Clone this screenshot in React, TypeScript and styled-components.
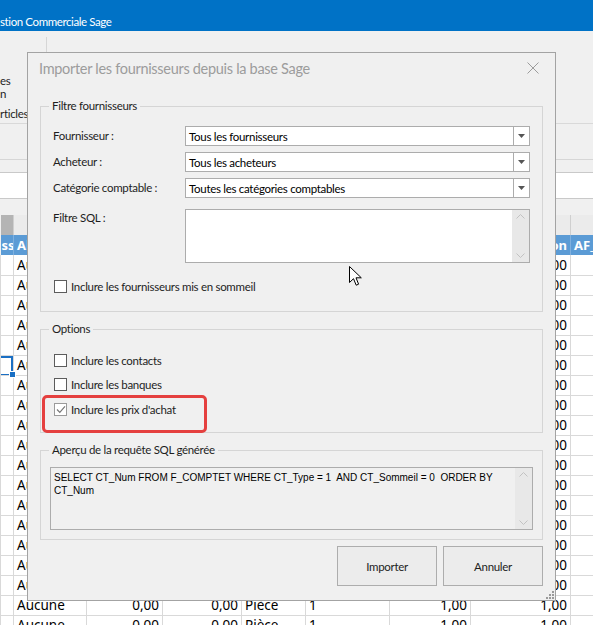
import React from "react";
import styled, { createGlobalStyle } from "styled-components";

const UI = `Lato, "Noto Sans", "Liberation Sans", sans-serif`;
const GRID = `"Noto Sans", "Liberation Sans", sans-serif`;

const GlobalStyle = createGlobalStyle`
  html, body { margin: 0; padding: 0; }
  body { font-family: ${UI}; background: #f0f0f0; }
  * { box-sizing: border-box; }
`;

const S = {
  Screen: styled.div`
    position: relative;
    width: 593px;
    height: 625px;
    overflow: hidden;
    background: #f0f0f0;
    color: #1e1e1e;
  `,
  AppTitle: styled.div`
    height: 31px;
    background: #0072c6;
    color: #fff;
    font-size: 11.5px;
    letter-spacing: -0.4px;
    line-height: 19px;
    padding-top: 12px;
    white-space: nowrap;
  `,
  Ribbon: styled.div`
    height: 93px;
    border-bottom: 1px solid #d9d9d9;
    display: flex;
  `,
  RibbonGroup: styled.div`
    width: 47px;
    margin-top: 6px;
    border-right: 1px solid #d6d6d6;
    display: flex;
    flex-direction: column;
    font-size: 11.5px;
    letter-spacing: -0.3px;
    line-height: 13px;
    padding-top: 37px;
  `,
  RibbonLast: styled.span`
    margin-top: 7px;
  `,
  Toolbar: styled.div`
    height: 36px;
    border-bottom: 1px solid #d6d6d6;
  `,
  SearchBox: styled.div`
    margin-top: 12px;
    height: 27px;
    background: #fff;
    border-top: 1px solid #c9c9c9;
    border-bottom: 1px solid #c9c9c9;
  `,
  Grid: styled.table`
    margin-top: 16px;
    border-collapse: collapse;
    table-layout: fixed;
    width: 640px;
    font-family: ${GRID};
    font-size: 13.5px;
  `,
  FilterCell: styled.td<{ $dark?: boolean }>`
    height: 20px;
    padding: 0;
    background: ${(p) => (p.$dark ? "#b4b4b4" : "#ebebeb")};
    border-right: 1px solid #cfcfcf;
  `,
  HeadCell: styled.th<{ $right?: boolean; $tight?: boolean }>`
    height: 20px;
    padding: ${(p) => (p.$tight ? "0 0 0 1px" : "0 3px")};
    background: #5b9bd5;
    color: #fff;
    font-size: 13px;
    font-weight: 700;
    text-align: ${(p) => (p.$right ? "right" : "left")};
    white-space: nowrap;
    overflow: hidden;
    text-overflow: clip;
    border-right: 1px solid #7fb0df;
  `,
  Cell: styled.td<{ $right?: boolean; $focus?: boolean }>`
    position: relative;
    height: 20px;
    padding: 0 3px;
    line-height: 18px;
    background: #fff;
    color: #000;
    text-align: ${(p) => (p.$right ? "right" : "left")};
    white-space: nowrap;
    overflow: ${(p) => (p.$focus ? "visible" : "hidden")};
    border: 1px solid #d9d9d9;
    border-top: none;
    ${(p) =>
      p.$focus &&
      `
      box-shadow: inset 0 2px 0 #1a6fc4, inset -2px 0 0 #1a6fc4, inset 0 -1px 0 #1a6fc4;
      &::after {
        content: "";
        position: absolute;
        right: -3px;
        bottom: -3px;
        width: 5px;
        height: 5px;
        background: #1a6fc4;
        border: 1px solid #fff;
        z-index: 2;
      }
    `}
  `,
  Dialog: styled.div`
    position: absolute;
    left: 27px;
    top: 52px;
    width: 529px;
    height: 549px;
    border: 1px solid #a3a3a3;
    background: #f0f0f0;
    display: flex;
    flex-direction: column;
    font-size: 11.5px;
    letter-spacing: -0.3px;
    z-index: 5;
  `,
  DialogTitle: styled.div`
    height: 30px;
    padding: 0 16px 0 11px;
    display: flex;
    align-items: center;
    justify-content: space-between;
    font-size: 14.5px;
    letter-spacing: -0.3px;
    color: #9c9c9c;
  `,
  DialogBody: styled.div`
    padding: 0 12px;
    display: flex;
    flex-direction: column;
  `,
  Group: styled.fieldset<{ $top: number }>`
    margin: ${(p) => p.$top}px 0 0 0;
    padding: 0;
    border: 1px solid #d5d5d5;
    min-width: 0;
  `,
  Legend: styled.legend`
    margin-left: 8px;
    padding: 0 3px;
    font-size: 11.5px;
    line-height: 16px;
    color: #1e1e1e;
  `,
  GroupInner: styled.div<{ $pad: string }>`
    padding: ${(p) => p.$pad};
    display: flex;
    flex-direction: column;
  `,
  FieldRow: styled.div<{ $gap: number; $top?: boolean }>`
    display: grid;
    grid-template-columns: 132px 1fr;
    align-items: ${(p) => (p.$top ? "start" : "center")};
    margin-top: ${(p) => p.$gap}px;
  `,
  Label: styled.span<{ $pt?: number }>`
    padding-top: ${(p) => p.$pt ?? 0}px;
    line-height: 16px;
    white-space: nowrap;
  `,
  Combo: styled.div`
    height: 20px;
    border: 1px solid #acacac;
    background: #fff;
    display: flex;
    align-items: center;
  `,
  ComboText: styled.span`
    flex: 1;
    padding-left: 3px;
    color: #000;
    white-space: nowrap;
  `,
  ComboButton: styled.span`
    width: 16px;
    height: 100%;
    border-left: 1px solid #acacac;
    display: flex;
    align-items: center;
    justify-content: center;
  `,
  Memo: styled.div<{ $h: number; $bg: string }>`
    height: ${(p) => p.$h}px;
    border: 1px solid #acacac;
    background: ${(p) => p.$bg};
    display: flex;
  `,
  MemoText: styled.div`
    flex: 1;
    min-width: 0;
    overflow: hidden;
    padding: 3px 3px;
    font-family: "Liberation Sans", sans-serif;
    font-size: 10px;
    letter-spacing: 0;
    line-height: 13px;
    color: #000;
    white-space: pre;
  `,
  ScrollBar: styled.div`
    flex: 0 0 17px;
    background: #e8e8e8;
    display: flex;
    flex-direction: column;
    justify-content: space-between;
    align-items: center;
    padding: 4px 0;
  `,
  CheckRow: styled.label<{ $gap: number }>`
    position: relative;
    display: flex;
    align-items: center;
    gap: 4px;
    height: 16px;
    margin-top: ${(p) => p.$gap}px;
    margin-left: 1px;
    white-space: nowrap;
  `,
  Box: styled.span<{ $checked?: boolean }>`
    width: 13px;
    height: 13px;
    border: 1px solid ${(p) => (p.$checked ? "#9a9a9a" : "#5c5c5c")};
    background: #fff;
    display: flex;
    align-items: center;
    justify-content: center;
  `,
  Highlight: styled.span`
    position: absolute;
    left: -12px;
    top: -6px;
    width: 165px;
    height: 38px;
    border: 3px solid #e5403f;
    border-radius: 5px;
    pointer-events: none;
  `,
  Buttons: styled.div`
    display: flex;
    justify-content: flex-end;
    gap: 6px;
    margin-top: 6px;
  `,
  Button: styled.button`
    width: 100px;
    height: 40px;
    border: 1px solid #adadad;
    background: #ececec;
    font-family: ${UI};
    font-size: 11.5px;
    letter-spacing: -0.3px;
    color: #1e1e1e;
  `,
  Grip: styled.svg`
    position: absolute;
    right: 1px;
    bottom: 1px;
  `,
  Cursor: styled.svg`
    position: absolute;
    left: 349px;
    top: 266px;
    z-index: 10;
  `,
};

const cols = [13, 73, 76, 79, 64, 84, 81, 100, 70];
const heads: [string, boolean][] = [
  ["ss", false],
  ["Al", false],
  ["AF_PrixAch", true],
  ["AF_Remise", true],
  ["AF_Unite", false],
  ["AF_Colisage", false],
  ["AF_QteMini", true],
  ["Conversion", true],
  ["AF_", false],
];
const rowValues: [string, boolean][] = [
  ["", false],
  ["Aucune", false],
  ["0,00", true],
  ["0,00", true],
  ["Pièce", false],
  ["1", false],
  ["1,00", true],
  ["1,00", true],
  ["", false],
];

const Arrow = () => (
  <svg width="7" height="4" viewBox="0 0 7 4">
    <path d="M0 0h7L3.5 4z" fill="#555" />
  </svg>
);

const Chevron = ({ up }: { up?: boolean }) => (
  <svg width="9" height="5" viewBox="0 0 9 5">
    <polyline
      points={up ? "0.5,4.5 4.5,0.5 8.5,4.5" : "0.5,0.5 4.5,4.5 8.5,0.5"}
      fill="none"
      stroke="#c2c2c2"
      strokeWidth="1"
    />
  </svg>
);

const Tick = () => (
  <svg width="10" height="9" viewBox="0 0 10 9">
    <polyline points="1,4.5 3.8,7.3 9,1.3" fill="none" stroke="#777" strokeWidth="1.2" />
  </svg>
);

const Check = ({ label, gap }: { label: string; gap: number }) => (
  <S.CheckRow $gap={gap}>
    <S.Box />
    {label}
  </S.CheckRow>
);

const Combo = ({ text }: { text: string }) => (
  <S.Combo>
    <S.ComboText>{text}</S.ComboText>
    <S.ComboButton>
      <Arrow />
    </S.ComboButton>
  </S.Combo>
);

export default function App() {
  return (
    <>
      <GlobalStyle />
      <S.Screen>
        <S.AppTitle>stion Commerciale Sage</S.AppTitle>
        <S.Ribbon>
          <S.RibbonGroup>
            <span>es</span>
            <span>n</span>
            <S.RibbonLast>rticles</S.RibbonLast>
          </S.RibbonGroup>
        </S.Ribbon>
        <S.Toolbar />
        <S.SearchBox />
        <S.Grid>
          <colgroup>
            {cols.map((w, i) => (
              <col key={i} style={{ width: w }} />
            ))}
          </colgroup>
          <tbody>
            <tr>
              {cols.map((_, i) => (
                <S.FilterCell key={i} $dark={i === 0} />
              ))}
            </tr>
            <tr>
              {heads.map(([h, r], i) => (
                <S.HeadCell key={i} $right={r} $tight={i === 0}>
                  {h}
                </S.HeadCell>
              ))}
            </tr>
            {Array.from({ length: 19 }).map((_, r) => (
              <tr key={r}>
                {rowValues.map(([v, right], i) => (
                  <S.Cell key={i} $right={right} $focus={r === 5 && i === 0}>
                    {v}
                  </S.Cell>
                ))}
              </tr>
            ))}
          </tbody>
        </S.Grid>

        <S.Dialog>
          <S.DialogTitle>
            <span>Importer les fournisseurs depuis la base Sage</span>
            <svg width="12" height="12" viewBox="0 0 12 12">
              <path d="M0.5 0.5L11.5 11.5M11.5 0.5L0.5 11.5" stroke="#9c9c9c" strokeWidth="1" />
            </svg>
          </S.DialogTitle>
          <S.DialogBody>
            <S.Group $top={15}>
              <S.Legend>Filtre fournisseurs</S.Legend>
              <S.GroupInner $pad="12px 12px 17px 12px">
                <S.FieldRow $gap={0}>
                  <S.Label>Fournisseur :</S.Label>
                  <Combo text="Tous les fournisseurs" />
                </S.FieldRow>
                <S.FieldRow $gap={6}>
                  <S.Label>Acheteur :</S.Label>
                  <Combo text="Tous les acheteurs" />
                </S.FieldRow>
                <S.FieldRow $gap={6}>
                  <S.Label>Catégorie comptable :</S.Label>
                  <Combo text="Toutes les catégories comptables" />
                </S.FieldRow>
                <S.FieldRow $gap={11} $top>
                  <S.Label $pt={1}>Filtre SQL :</S.Label>
                  <S.Memo $h={54} $bg="#fff">
                    <S.MemoText />
                    <S.ScrollBar>
                      <Chevron up />
                      <Chevron />
                    </S.ScrollBar>
                  </S.Memo>
                </S.FieldRow>
                <Check gap={15} label="Inclure les fournisseurs mis en sommeil" />
              </S.GroupInner>
            </S.Group>

            <S.Group $top={9}>
              <S.Legend>Options</S.Legend>
              <S.GroupInner $pad="15px 12px 15px 12px">
                <Check gap={0} label="Inclure les contacts" />
                <Check gap={8} label="Inclure les banques" />
                <S.CheckRow $gap={9}>
                  <S.Box $checked>
                    <Tick />
                  </S.Box>
                  Inclure les prix d'achat
                  <S.Highlight />
                </S.CheckRow>
              </S.GroupInner>
            </S.Group>

            <S.Group $top={9}>
              <S.Legend>Aperçu de la requête SQL générée</S.Legend>
              <S.GroupInner $pad="9px 9px 9px 9px">
                <S.Memo $h={63} $bg="#f0f0f0">
                  <S.MemoText>
                    {"SELECT CT_Num FROM F_COMPTET WHERE CT_Type = 1  AND CT_Sommeil = 0  ORDER BY\nCT_Num"}
                  </S.MemoText>
                  <S.ScrollBar>
                    <Chevron up />
                    <Chevron />
                  </S.ScrollBar>
                </S.Memo>
              </S.GroupInner>
            </S.Group>

            <S.Buttons>
              <S.Button>Importer</S.Button>
              <S.Button>Annuler</S.Button>
            </S.Buttons>
          </S.DialogBody>
          <S.Grip width="8" height="8" viewBox="0 0 8 8">
            {[
              [6, 0],
              [3, 3],
              [6, 3],
              [0, 6],
              [3, 6],
              [6, 6],
            ].map(([x, y], i) => (
              <rect key={i} x={x} y={y} width="2" height="2" fill="#9a9a9a" />
            ))}
          </S.Grip>
        </S.Dialog>

        <S.Cursor width="13" height="21" viewBox="0 0 13 21">
          <path
            d="M0.5 0.5 L0.5 16.5 L4.5 12.7 L7.2 19.2 L9.6 18.2 L7 11.8 L12.3 11.8 Z"
            fill="#fff"
            stroke="#000"
            strokeWidth="1"
            strokeLinejoin="miter"
          />
        </S.Cursor>
      </S.Screen>
    </>
  );
}
